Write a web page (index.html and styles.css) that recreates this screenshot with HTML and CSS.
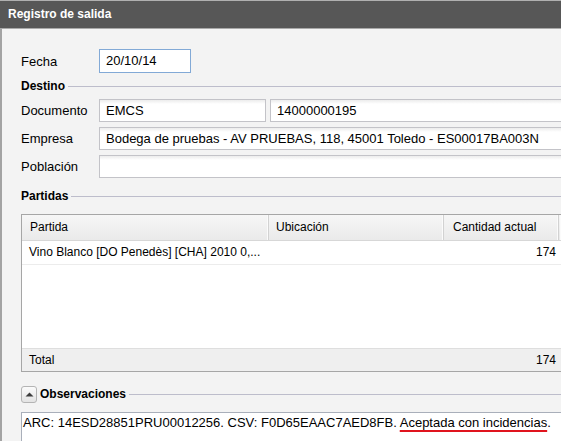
FILE: index.html
```html
<!DOCTYPE html>
<html lang="es">
<head>
<meta charset="utf-8">
<title>Registro de salida</title>
<link rel="stylesheet" href="styles.css">
</head>
<body>
<div class="window">
  <div class="titlebar">Registro de salida</div>
  <div class="content">
    <div class="field-row fecha-row">
      <span class="label">Fecha</span>
      <div class="input input-fecha">20/10/14</div>
    </div>

    <div class="legend"><span>Destino</span><i class="rule"></i></div>
    <div class="field-stack">
      <div class="field-row">
        <span class="label">Documento</span>
        <div class="input input-doc">EMCS</div>
        <div class="input input-num open-end">14000000195</div>
      </div>
      <div class="field-row">
        <span class="label">Empresa</span>
        <div class="input open-end">Bodega de pruebas - AV PRUEBAS, 118, 45001 Toledo - ES00017BA003N</div>
      </div>
      <div class="field-row">
        <span class="label">Población</span>
        <div class="input open-end"></div>
      </div>
    </div>

    <div class="legend legend-partidas"><span>Partidas</span><i class="rule"></i></div>
    <div class="grid">
      <div class="grid-head">
        <div class="col c1">Partida</div>
        <div class="col c2">Ubicación</div>
        <div class="col c3">Cantidad actual</div>
        <div class="col c4"></div>
      </div>
      <div class="grid-row">
        <div class="col c1">Vino Blanco [DO Penedès] [CHA] 2010 0,...</div>
        <div class="col c2"></div>
        <div class="col c3 num">174</div>
        <div class="col c4"></div>
      </div>
      <div class="grid-fill"></div>
      <div class="grid-total">
        <div class="col c1">Total</div>
        <div class="col c2"></div>
        <div class="col c3 num">174</div>
        <div class="col c4"></div>
      </div>
    </div>

    <div class="legend legend-obs">
      <button class="toggle" type="button" aria-label="Contraer">
        <svg width="9" height="5" viewBox="0 0 9 5"><path d="M0.5 4.5 L4.5 0.5 L8.5 4.5 Z" fill="#3c3c3c"/></svg>
      </button>
      <span>Observaciones</span><i class="rule"></i>
    </div>
    <div class="notes">ARC: 14ESD28851PRU00012256. CSV: F0D65EAAC7AED8FB. <span class="misspelled">Aceptada con incidencias</span>.</div>
  </div>
</div>
</body>
</html>
```

FILE: styles.css
```css
html, body {
  margin: 0;
  padding: 0;
}

body {
  width: 561px;
  height: 441px;
  overflow: hidden;
  background: #f3f3f3;
  font-family: "Liberation Sans", Arial, sans-serif;
  font-size: 13px;
  color: #000;
}

/* The dialog runs on past the right edge, so the open-ended
   fields, grid and notes have no right border. */
.window {
  width: 561px;
  height: 441px;
  display: flex;
  flex-direction: column;
  overflow: hidden;
}

.titlebar {
  flex: none;
  height: 27px;
  line-height: 27px;
  background: #575757;
  border-top: 1px solid #b0b0b0;
  border-bottom: 1px solid #a9a9a9;
  color: #fff;
  font-weight: bold;
  font-size: 12px;
  padding-left: 8px;
}

.content {
  flex: 1;
  min-height: 0;
  border-left: 2px solid #a3a3a3;
  padding: 20px 0 0 19px;
  display: flex;
  flex-direction: column;
}

.field-row {
  display: flex;
  align-items: center;
  height: 23px;
}

.fecha-row {
  height: 24px;
}

.field-stack {
  display: flex;
  flex-direction: column;
  gap: 5px;
  margin-top: 6px;
}

.label {
  width: 78px;
  flex: none;
}

.input {
  box-sizing: border-box;
  height: 23px;
  line-height: 21px;
  padding-left: 6px;
  background: linear-gradient(#ececec, #ffffff 4px);
  border: 1px solid #c3c3c8;
  white-space: nowrap;
  overflow: hidden;
  flex: none;
}

.input.open-end {
  flex: 1;
  min-width: 0;
  border-right: none;
}

.input-fecha {
  width: 92px;
  height: 24px;
  line-height: 22px;
  background: #fff;
  border-color: #82a9d6;
}

.input-doc {
  width: 167px;
}

.input-num {
  margin-left: 4px;
}

.legend {
  display: flex;
  align-items: center;
  height: 14px;
  margin-top: 6px;
  font-weight: bold;
  font-size: 12px;
}

.legend .rule {
  flex: 1;
  height: 0;
  border-top: 1px solid #bdbdcb;
  margin-left: 3px;
}

.legend-partidas {
  margin-top: 11px;
}

.grid {
  flex: none;
  margin-top: 11px;
  height: 158px;
  box-sizing: border-box;
  border: 1px solid #a6a6a6;
  border-right: none;
  background: #fff;
  display: flex;
  flex-direction: column;
  font-size: 12px;
}

.grid .col {
  box-sizing: border-box;
  flex: none;
  padding: 0 7px;
  white-space: nowrap;
  overflow: hidden;
}

.grid .c1 { width: 247px; }
.grid .c2 { width: 175px; }
.grid .c3 { width: 115px; }
.grid .c4 { flex: 1; min-width: 0; padding: 0; }

.grid .num {
  text-align: right;
  padding-right: 3px;
}

.grid-head {
  display: flex;
  height: 25px;
  line-height: 25px;
  background: linear-gradient(#f6f6f6, #eaeaea);
  border-bottom: 1px solid #d7d7d7;
}

.grid-head .col {
  border-right: 1px solid #d2d2d2;
  box-shadow: inset -1px 0 0 #fbfbfb;
}

.grid-head .c4 {
  border-right: none;
}

.grid-head .c1 {
  padding-left: 8px;
}

.grid-head .c3 {
  padding-left: 9px;
}

.grid-row {
  display: flex;
  height: 23px;
  line-height: 23px;
  border-bottom: 1px solid #ececec;
}

.grid-fill {
  flex: 1;
}

.grid-total {
  display: flex;
  height: 22px;
  line-height: 22px;
  background: #efefef;
  border-top: 1px solid #dedede;
}

.legend-obs {
  height: 16px;
  margin-top: 14px;
}

.toggle {
  box-sizing: border-box;
  width: 16px;
  height: 17px;
  margin: 0 3px 0 0;
  padding: 0;
  border: 1px solid #b4b4b4;
  border-radius: 3px;
  background: linear-gradient(#fbfbfb, #e3e3e3);
  display: flex;
  align-items: center;
  justify-content: center;
}

.notes {
  margin-top: 10px;
  flex: 1;
  min-height: 0;
  box-sizing: border-box;
  border: 1px solid #a9afba;
  border-right: none;
  border-bottom: none;
  background: #fff;
  padding: 1px 0 0 1px;
  line-height: 17px;
  white-space: nowrap;
  overflow: hidden;
}

.misspelled {
  text-decoration: underline;
  text-decoration-color: #e0141e;
  text-decoration-thickness: 2px;
  text-underline-offset: 3px;
}
```
